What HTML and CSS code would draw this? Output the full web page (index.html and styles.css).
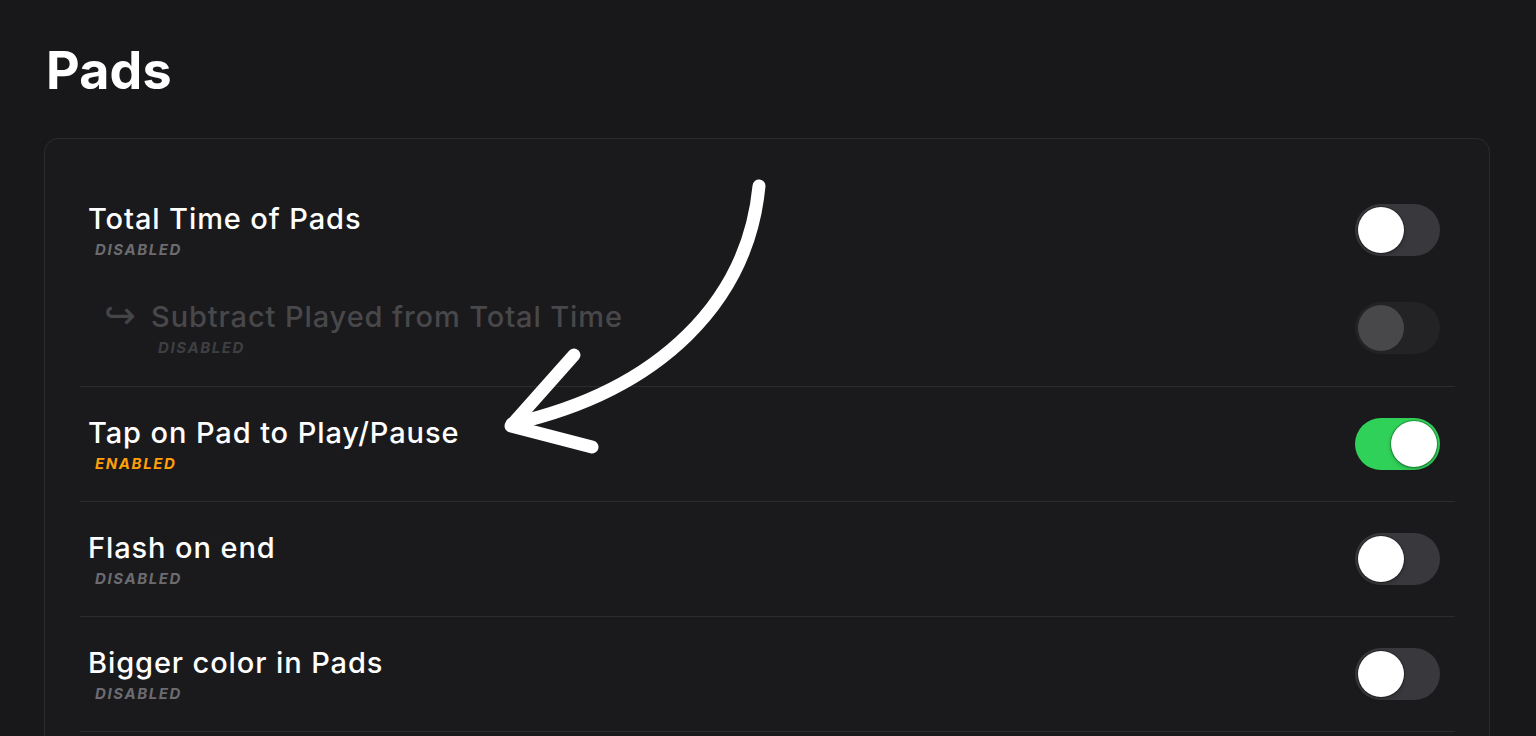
FILE: index.html
```html
<!DOCTYPE html>
<html lang="en">
<head>
    <meta charset="UTF-8">
    <meta name="viewport" content="width=device-width, initial-scale=1.0">
    <title>Pads</title>
    <link rel="stylesheet" href="styles.css">
</head>
<body>
    <div class="page">
        <h1 class="title">Pads</h1>

        <section class="card">
            <div class="group">
                <div class="row">
                    <div class="info">
                        <div class="label">Total Time of Pads</div>
                        <div class="status">Disabled</div>
                    </div>
                    <div class="toggle"><span class="knob"></span></div>
                </div>
                <div class="row sub">
                    <span class="hook">↪</span>
                    <div class="info">
                        <div class="label">Subtract Played from Total Time</div>
                        <div class="status">Disabled</div>
                    </div>
                    <div class="toggle dim"><span class="knob"></span></div>
                </div>
            </div>

            <div class="row line">
                <div class="info">
                    <div class="label">Tap on Pad to Play/Pause</div>
                    <div class="status on">Enabled</div>
                </div>
                <div class="toggle active"><span class="knob"></span></div>
            </div>

            <div class="row line">
                <div class="info">
                    <div class="label">Flash on end</div>
                    <div class="status">Disabled</div>
                </div>
                <div class="toggle"><span class="knob"></span></div>
            </div>

            <div class="row line">
                <div class="info">
                    <div class="label">Bigger color in Pads</div>
                    <div class="status">Disabled</div>
                </div>
                <div class="toggle"><span class="knob"></span></div>
            </div>
        </section>

        <!-- hand drawn pointer -->
        <svg class="pointer" width="1536" height="736" viewBox="0 0 1536 736">
            <path d="M759 186 C748 300, 662 390, 512 424" />
            <path d="M574 355 L511 426 L592 447" />
        </svg>
    </div>
</body>
</html>
```

FILE: styles.css
```css
body {
    margin: 0;
    background-color: #18181b;
    font-family: Inter, "Noto Sans", sans-serif;
    color: #fff;
}
.page {
    position: relative;
    box-sizing: border-box;
    height: 736px;
    overflow: hidden;
    padding: 40px 46px 0 44px;
}
.title {
    margin: 0 0 36px 2px;
    font-size: 52px;
    line-height: 62px;
    font-weight: 700;
    letter-spacing: 0.2px;
}
.card {
    border: 1px solid #2b2b2e;
    border-radius: 14px;
    background-color: #1a1a1d;
    padding: 42px 34px 60px 35px;
}
.group {
    padding-bottom: 9px;
    border-bottom: 1px solid #2c2c2f;
}
.row {
    display: flex;
    align-items: center;
    height: 98px;
    padding: 0 15px 0 9px;
}
.row.line {
    height: 114px;
    border-bottom: 1px solid #2c2c2f;
}
.info {
    flex: 1;
}
.label {
    margin-left: -1px;
    font-size: 29px;
    font-weight: 500;
    letter-spacing: 0.9px;
    line-height: 34px;
}
.status {
    margin: 4px 0 0 6px;
    font-size: 15px;
    font-weight: 700;
    font-style: italic;
    text-transform: uppercase;
    letter-spacing: 1.6px;
    color: #6c6c70;
}
.status.on {
    color: #ff9f0a;
}
.sub {
    padding-left: 24px;
}
.sub .hook {
    font-family: "DejaVu Sans", sans-serif;
    font-size: 38px;
    color: #454548;
    width: 48px;
    margin-top: -26px;
}
.sub .label {
    color: #48484b;
}
.sub .status {
    color: #3f3f42;
}
.toggle {
    position: relative;
    width: 85px;
    height: 52px;
    border-radius: 26px;
    background-color: #39393d;
}
.knob {
    position: absolute;
    top: 3px;
    left: 3px;
    width: 46px;
    height: 46px;
    border-radius: 50%;
    background-color: #fff;
    box-shadow: 0 0 0 1px rgba(0, 0, 0, 0.25), 0 2px 4px rgba(0, 0, 0, 0.25);
}
.toggle.active {
    background-color: #30d158;
}
.toggle.active .knob {
    left: 36px;
}
.toggle.dim {
    background-color: #232326;
}
.toggle.dim .knob {
    background-color: #48484b;
    box-shadow: none;
}
.pointer {
    position: absolute;
    top: 0;
    left: 0;
    pointer-events: none;
}
.pointer path {
    fill: none;
    stroke: #fff;
    stroke-width: 13;
    stroke-linecap: round;
    stroke-linejoin: round;
}
```
